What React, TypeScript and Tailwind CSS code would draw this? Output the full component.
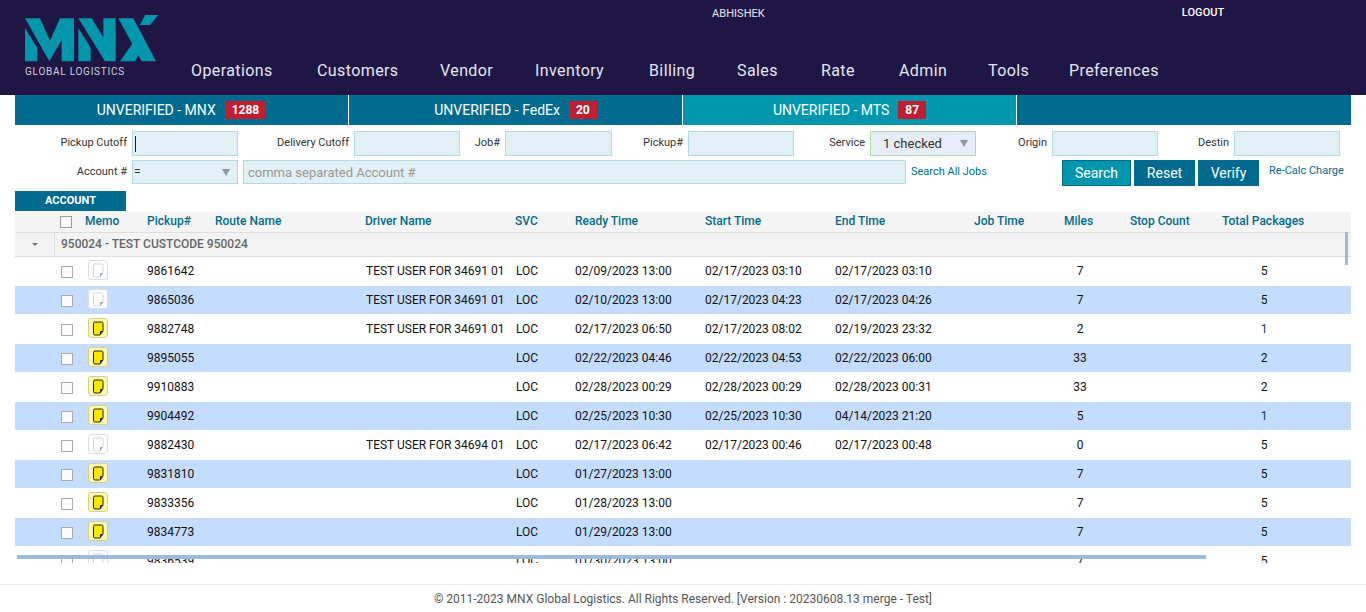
import React from "react";

const NAV = [
  { n: "Operations", w: "w-[126px]" },
  { n: "Customers", w: "w-[123px]" },
  { n: "Vendor", w: "w-[95px]" },
  { n: "Inventory", w: "w-[114px]" },
  { n: "Billing", w: "w-[88px]" },
  { n: "Sales", w: "w-[84px]" },
  { n: "Rate", w: "w-[78px]" },
  { n: "Admin", w: "w-[89px]" },
  { n: "Tools", w: "w-[81px]" },
  { n: "Preferences", w: "w-[95px]" },
];
const COLS = "grid grid-cols-[40px_30px_62px_68px_150px_150px_60px_130px_130px_139px_90px_66px_92px_129px]";

type Row = { p: string; d: string; r: string; s: string; e: string; m: string; t: string; y: boolean; blue?: boolean };
const ROWS: Row[] = [
  { p: "9861642", d: "TEST USER FOR 34691 01", r: "02/09/2023 13:00", s: "02/17/2023 03:10", e: "02/17/2023 03:10", m: "7", t: "5", y: false },
  { p: "9865036", d: "TEST USER FOR 34691 01", r: "02/10/2023 13:00", s: "02/17/2023 04:23", e: "02/17/2023 04:26", m: "7", t: "5", y: false },
  { p: "9882748", d: "TEST USER FOR 34691 01", r: "02/17/2023 06:50", s: "02/17/2023 08:02", e: "02/19/2023 23:32", m: "2", t: "1", y: true, blue: true },
  { p: "9895055", d: "", r: "02/22/2023 04:46", s: "02/22/2023 04:53", e: "02/22/2023 06:00", m: "33", t: "2", y: true },
  { p: "9910883", d: "", r: "02/28/2023 00:29", s: "02/28/2023 00:29", e: "02/28/2023 00:31", m: "33", t: "2", y: true },
  { p: "9904492", d: "", r: "02/25/2023 10:30", s: "02/25/2023 10:30", e: "04/14/2023 21:20", m: "5", t: "1", y: true, blue: true },
  { p: "9882430", d: "TEST USER FOR 34694 01", r: "02/17/2023 06:42", s: "02/17/2023 00:46", e: "02/17/2023 00:48", m: "0", t: "5", y: false },
  { p: "9831810", d: "", r: "01/27/2023 13:00", s: "", e: "", m: "7", t: "5", y: true },
  { p: "9833356", d: "", r: "01/28/2023 13:00", s: "", e: "", m: "7", t: "5", y: true },
  { p: "9834773", d: "", r: "01/29/2023 13:00", s: "", e: "", m: "7", t: "5", y: true },
  { p: "9836539", d: "", r: "01/30/2023 13:00", s: "", e: "", m: "7", t: "5", y: false },
];

function Logo() {
  return (
    <svg width="134" height="48" viewBox="0 0 402 144" className="block">
      <g fill="#0097ad">
        <polygon points="0,42 37,102 37,142 0,142" />
        <polygon points="0,13 45,13 75,80 105,13 147,13 147,142 110,142 110,78 73,142" />
        <polygon points="160,42 197,102 197,142 160,142" />
        <polygon points="160,13 200,13 235,70 235,13 272,13 272,142 240,142" />
        <polygon points="280,13 325,13 393,142 350,142" />
        <polygon points="285,142 325,85 345,115 330,142" />
        <polygon points="345,33 360,3 400,3 375,33" />
      </g>
    </svg>
  );
}

function Memo({ on }: { on: boolean }) {
  return (
    <div className={`-mt-[2px] flex h-[20px] w-[20px] items-center justify-center rounded-[3px] border ${on ? "border-[#d6cf8e] bg-[#fdf8ae]" : "border-[#dcdcdc] bg-white"}`}>
      <svg width="12" height="15" viewBox="0 0 12 15">
        <path
          d="M1.5 2.5Q1.5 1 3 1H9.5Q11 1 11 2.5V10L8 14H3Q1.5 14 1.5 12.5Z"
          fill={on ? "#ffe600" : "#fff"}
          stroke={on ? "#222" : "#c9d6e6"}
          strokeWidth="1"
        />
        <path d="M11 10L8 14V11Q8 10 9 10Z" fill={on ? "#222" : "#8fa3bb"} />
      </svg>
    </div>
  );
}

function Tab({ label, n, active }: { label: string; n: string; active?: boolean }) {
  return (
    <div className={`flex h-[30px] w-[334px] items-center justify-center gap-[9px] border-r border-white text-[14px] text-white ${active ? "bg-[#0097ad]" : "bg-[#006b8f]"}`}>
      <span>{label}</span>
      <span className="flex h-[18px] items-center bg-[#c01f32] px-[7px] text-[12px] font-bold">{n}</span>
    </div>
  );
}

function Field({ label, w, iw, caret }: { label: string; w: string; iw: string; caret?: boolean }) {
  return (
    <>
      <span className={`${w} pr-[5px] text-right text-[11px] leading-[23px] text-[#333]`}>{label}</span>
      <div className={`${iw} flex h-[25px] items-center border border-[#b5dbe2] bg-[#e1f0f4] pl-[2px]`}>
        {caret && <span className="h-[16px] w-px bg-[#1f1646]" />}
      </div>
    </>
  );
}

export default function App() {
  return (
    <div className="flex h-[612px] flex-col overflow-hidden bg-white font-['Roboto',sans-serif] text-[#111]">
      <header className="flex h-[95px] shrink-0 bg-[#1f1646]">
        <div className="ml-[25px] w-[134px] pt-[14px]">
          <Logo />
          <div className="mt-[4px] whitespace-nowrap text-[10px] leading-[12px] tracking-[0.75px] text-[#d0d0d8]">GLOBAL LOGISTICS</div>
        </div>
        <div className="ml-[32px] flex flex-col">
          <div className="flex h-[62px] items-start pt-[7px] text-[11px] leading-[13px] tracking-[0.05px] text-[#e8e8f0]">
            <span className="ml-[521px]">ABHISHEK</span>
            <span className="ml-[417px] -mt-px font-medium text-white">LOGOUT</span>
          </div>
          <nav className="flex text-[16px] leading-[18px] tracking-[0.4px] text-[#e4e6f0]">
            {NAV.map((n) => (
              <span key={n.n} className={`${n.w} whitespace-nowrap`}>{n.n}</span>
            ))}
          </nav>
        </div>
      </header>

      <div className="ml-[15px] flex w-[1336px] shrink-0 bg-[#006b8f]">
        <Tab label="UNVERIFIED - MNX" n="1288" />
        <Tab label="UNVERIFIED - FedEx" n="20" />
        <Tab label="UNVERIFIED - MTS" n="87" active />
      </div>

      <div className="ml-[15px] mt-[6px] flex h-[25px] shrink-0">
        <Field label="Pickup Cutoff" w="w-[117px]" iw="w-[106px]" caret />
        <Field label="Delivery Cutoff" w="w-[116px]" iw="w-[106px]" />
        <Field label="Job#" w="w-[45px]" iw="w-[107px]" />
        <Field label="Pickup#" w="w-[76px]" iw="w-[106px]" />
        <span className="w-[76px] pr-[5px] text-right text-[11px] leading-[23px] text-[#333]">Service</span>
        <div className="flex h-[25px] w-[106px] items-center justify-between border border-[#aedfa6] bg-[#e6edf8] pl-[12px] pr-[7px] text-[13px] text-[#333]">
          <span>1 checked</span>
          <span className="h-0 w-0 border-x-[4px] border-t-[7px] border-x-transparent border-t-[#8c9aa6]" />
        </div>
        <Field label="Origin" w="w-[76px]" iw="w-[106px]" />
        <Field label="Destin" w="w-[76px]" iw="w-[106px]" />
      </div>

      <div className="ml-[15px] mt-[4px] flex h-[27px] shrink-0 items-start">
        <span className="w-[117px] pr-[5px] text-right text-[11px] leading-[23px] text-[#333]">Account #</span>
        <div className="flex h-[24px] w-[106px] items-center justify-between border border-[#b5dbe2] bg-[#e1f0f4] pl-px pr-[7px] text-[12px] text-[#333]">
          <span>=</span>
          <span className="h-0 w-0 border-x-[4px] border-t-[7px] border-x-transparent border-t-[#8c9aa6]" />
        </div>
        <div className="ml-[5px] flex h-[24px] w-[663px] items-center border border-[#b5dbe2] bg-[#e1f0f4] pl-[4px] pt-px text-[13px] text-[#999]">
          comma separated Account #
        </div>
        <span className="ml-[5px] w-[76px] whitespace-nowrap text-[11px] leading-[24px] text-[#006b8f]">Search All Jobs</span>
        <div className="ml-[75px] flex h-[26px] items-stretch gap-[3px] text-[14px] text-white">
          <span className="flex w-[69px] items-center justify-center border border-[#006b8f] bg-[#0097ad]">Search</span>
          <span className="flex w-[61px] items-center justify-center bg-[#006b8f]">Reset</span>
          <span className="flex w-[61px] items-center justify-center bg-[#006b8f]">Verify</span>
        </div>
        <span className="ml-[10px] whitespace-nowrap text-[11px] leading-[22px] text-[#006b8f]">Re-Calc Charge</span>
      </div>

      <div className="ml-[15px] mt-[4px] flex h-[20px] w-[111px] shrink-0 items-center justify-center bg-[#006b8f] text-[11px] font-bold text-white">ACCOUNT</div>

      <div className="relative ml-[15px] w-[1336px] shrink-0">
        <div className={`${COLS} mt-px h-[20px] items-center bg-[#f4f4f4] pb-[2px] text-[12px] font-medium leading-[18px] text-[#006b8f]`}>
          <span />
          <span className="ml-[5px] mt-[2px] h-[12px] w-[12px] border border-[#999] bg-[#fbfbfb]" />
          <span>Memo</span>
          <span>Pickup#</span>
          <span>Route Name</span>
          <span>Driver Name</span>
          <span>SVC</span>
          <span>Ready Time</span>
          <span>Start Time</span>
          <span>End Time</span>
          <span>Job Time</span>
          <span>Miles</span>
          <span>Stop Count</span>
          <span>Total Packages</span>
        </div>
        <div className="flex h-[25px] border-y border-[#dedede] bg-[#f3f3f3] text-[12px] font-medium text-[#666]">
          <div className="flex w-[40px] items-center justify-center border-r border-[#dedede]">
            <span className="h-0 w-0 border-x-[3px] border-t-[3px] border-x-transparent border-t-[#777]" />
          </div>
          <span className="ml-[6px] leading-[22px]">950024 - TEST CUSTCODE 950024</span>
        </div>

        <div className="h-[306px] overflow-hidden">
          {ROWS.map((r, i) => (
            <div key={r.p} className={`${COLS} h-[29px] items-center border-b border-white text-[12px] leading-[28px] ${i % 2 === 1 ? "bg-[#c4dcfd]" : "bg-white"}`}>
              <span />
              <span className="ml-[6px] mt-[2px] h-[12px] w-[12px] border border-[#aaa] bg-[#fbfbfb]" />
              <span className="ml-[3px]"><Memo on={r.y} /></span>
              <span>{r.p}</span>
              <span />
              <span className="whitespace-nowrap pl-px">{r.d}</span>
              <span className="pl-px">LOC</span>
              <span>{r.r}</span>
              <span>{r.s}</span>
              <span>{r.e}</span>
              <span />
              <span className="w-[32px] text-center">{r.m}</span>
              <span />
              <span className={`w-[84px] text-center ${r.blue ? "text-[#0b3a6e]" : ""}`}>{r.t}</span>
            </div>
          ))}
        </div>

        <div className="absolute left-[2px] top-[344px] h-[4px] w-[1189px] bg-[#9bbcd9]" />
        <div className="absolute left-[1330px] top-[21px] h-[33px] w-[3px] bg-[#9bbcd9]" />
      </div>

      <footer className="mt-[21px] flex h-[28px] shrink-0 items-center justify-center border-t border-[#eeeeee] text-[12px] text-[#555]">
        © 2011-2023 MNX Global Logistics. All Rights Reserved. [Version : 20230608.13 merge - Test]
      </footer>
    </div>
  );
}
